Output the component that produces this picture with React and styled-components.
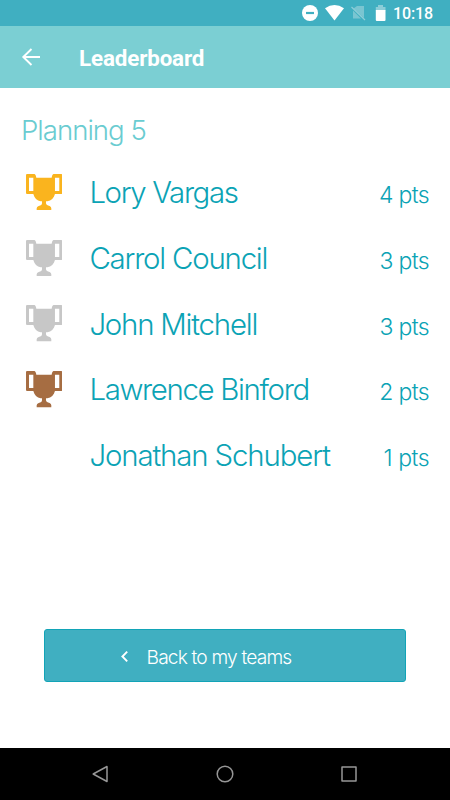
import React from "react";
import styled, { createGlobalStyle } from "styled-components";

const GlobalStyle = createGlobalStyle`
  * { box-sizing: border-box; }
  body { margin: 0; background: #fff; }
  svg { display: block; flex: none; }
`;

const Screen = styled.div`
  width: 450px;
  height: 800px;
  display: flex;
  flex-direction: column;
  overflow: hidden;
  background: #fff;
  font-family: Inter, "Liberation Sans", sans-serif;
  font-weight: 270;
`;

const StatusBar = styled.div`
  height: 26px;
  flex: none;
  display: flex;
  align-items: center;
  justify-content: flex-end;
  padding-right: 17px;
  background: #40afc1;
`;

const Clock = styled.span`
  margin-left: 7px;
  width: 40px;
  white-space: nowrap;
  color: #fff;
  font: 500 16px/26px Roboto, sans-serif;
  letter-spacing: -0.15px;
  padding-top: 2px;
`;

const AppBar = styled.header`
  height: 61.5px;
  flex: none;
  display: flex;
  align-items: center;
  padding-left: 21px;
  background: #7bcfd3;
`;

const Title = styled.h1`
  margin: 2px 0 0 38px;
  color: #fff;
  font: 700 22.4px/30px Roboto, sans-serif;
  letter-spacing: ${(p) => p.$tracking}px;
`;

const Content = styled.main`
  height: 660px;
  flex: none;
  padding: 27.5px 21px 0 21px;
`;

const Heading = styled.h2`
  margin: 0;
  height: 45px;
  color: #6accd1;
  font-size: 27.6px;
  font-weight: 270;
  line-height: 30.5px;
  letter-spacing: ${(p) => p.$tracking}px;
`;

const List = styled.ul`
  margin: 0;
  padding: 0;
  list-style: none;
`;

const Row = styled.li`
  height: 65.75px;
  display: flex;
  align-items: baseline;
  color: #0ba3b5;
  line-height: 66px;
`;

const Medal = styled.span`
  align-self: center;
  width: 68.4px;
  padding-left: 4.5px;
  margin-top: -1.5px;
`;

const Name = styled.span`
  flex: 1;
  font-size: 29.4px;
  white-space: nowrap;
  letter-spacing: ${(p) => p.$tracking}px;
`;

const Points = styled.span`
  font-size: 23px;
  white-space: nowrap;
  letter-spacing: ${(p) => p.$tracking}px;
`;

const BackButton = styled.button`
  width: 362px;
  height: 53px;
  margin: 140.5px 0 0 23px;
  padding: 0 0 0 76px;
  display: flex;
  align-items: center;
  border: 1px solid #12a4b7;
  border-radius: 3px;
  background: #40afc1;
  color: #fff;
  font: inherit;
  font-size: 19.2px;
  letter-spacing: -0.83px;
`;

const ButtonLabel = styled.span`
  margin: 2px 0 0 17.5px;
  line-height: 24px;
  white-space: nowrap;
`;

const NavBar = styled.nav`
  height: 52.5px;
  flex: none;
  display: flex;
  align-items: center;
  justify-content: space-between;
  padding: 0 92px;
  background: #000;
`;

const Trophy = ({ color }) => (
  <svg width="36.3" height="36.6" viewBox="78 222 109 110">
    <path
      fill={color}
      fillRule="evenodd"
      d="M81 222H103Q107 222 109 233H155Q157 222 161 222H184Q187 222 187 225V279Q187 282 184 282H165C162 294 154 302 142 304H138V310Q139 317 149 318Q154 320 154 325V331H110V325Q110 320 116 318Q126 317 126 310V304H122C111 302 103 294 100 282H81Q78 282 78 279V225Q78 222 81 222ZM87 233V273H100V233ZM165 233V273H178V233Z"
    />
  </svg>
);

const StatusIcons = () => (
  <svg width="86" height="26" viewBox="300 0 86 26">
    <circle cx="310" cy="13" r="8" fill="#fff" />
    <path d="M306 13H314" stroke="#40afc1" strokeWidth="2.2" />
    <path d="M325 8.3Q334.5 1.7 344 8.3L334.5 20.5Z" fill="#fff" />
    <path d="M357 6H364V18L353.5 8.5ZM353 10.5L361 18.5H353Z" fill="#7ac5d1" />
    <path d="M351.5 7L365 20" stroke="#8fced8" strokeWidth="1.2" />
    <path d="M378 5H383V7H385.5V10.5H375.8V7H378Z" fill="#8ccdd8" />
    <path d="M375.8 10H385.5V20Q385.5 21 384.5 21H376.8Q375.8 21 375.8 20Z" fill="#fff" />
  </svg>
);

const ArrowIcon = () => (
  <svg width="20" height="20" viewBox="0 0 20 20" fill="none" stroke="#fff" strokeWidth="1.9">
    <path d="M10.5 2L2.3 10L10.5 18M2.3 10H19" />
  </svg>
);

const ChevronIcon = () => (
  <svg width="8" height="12" viewBox="0 0 8 12" fill="none" stroke="#fff" strokeWidth="1.9">
    <path d="M6.2 1.7L1.4 6.5L6.2 11.3" />
  </svg>
);

const NavIcon = ({ children }) => (
  <svg width="18" height="18" viewBox="0 0 18 18" fill="none" stroke="#969696" strokeWidth="1.5" strokeLinejoin="round">
    {children}
  </svg>
);

const players = [
  { name: "Lory Vargas", points: 4, medal: "#fab41e", tracking: -1.37, ptsTracking: -0.65 },
  { name: "Carrol Council", points: 3, medal: "#c7c7c7", tracking: -1.2, ptsTracking: -0.65 },
  { name: "John Mitchell", points: 3, medal: "#c7c7c7", tracking: -1.2, ptsTracking: -0.65 },
  { name: "Lawrence Binford", points: 2, medal: "#a66d42", tracking: -1.33, ptsTracking: -0.65 },
  { name: "Jonathan Schubert", points: 1, tracking: -1.12, ptsTracking: -0.5 },
];

export default function App() {
  return (
    <Screen>
      <GlobalStyle />
      <StatusBar>
        <StatusIcons />
        <Clock>10:18</Clock>
      </StatusBar>
      <AppBar>
        <ArrowIcon />
        <Title $tracking={-0.15}>Leaderboard</Title>
      </AppBar>
      <Content>
        <Heading $tracking={-1}>Planning 5</Heading>
        <List>
          {players.map((p) => (
            <Row key={p.name}>
              <Medal>{p.medal && <Trophy color={p.medal} />}</Medal>
              <Name $tracking={p.tracking}>{p.name}</Name>
              <Points $tracking={p.ptsTracking}>{p.points} pts</Points>
            </Row>
          ))}
        </List>
        <BackButton>
          <ChevronIcon />
          <ButtonLabel>Back to my teams</ButtonLabel>
        </BackButton>
      </Content>
      <NavBar>
        <NavIcon><path d="M1.2 9L15 1.5V16.5Z" /></NavIcon>
        <NavIcon><circle cx="9" cy="9" r="7.8" /></NavIcon>
        <NavIcon><path d="M2 2H16V16H2Z" /></NavIcon>
      </NavBar>
    </Screen>
  );
}
